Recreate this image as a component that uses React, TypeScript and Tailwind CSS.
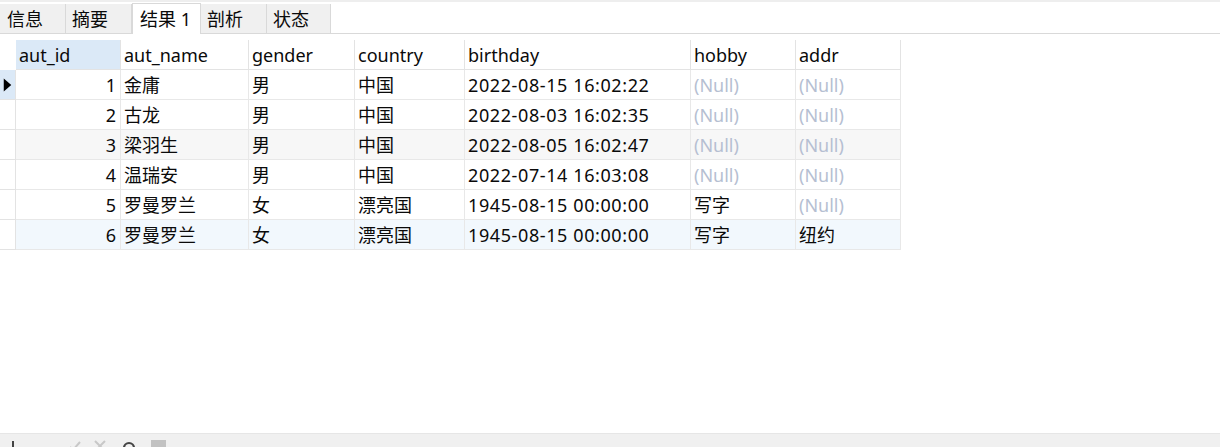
import React from "react";

const font = {
  fontFamily: '"Noto Sans", "Noto Sans CJK SC", sans-serif',
};

const cols = [
  { key: "id", label: "aut_id", w: "w-[105px]", right: true },
  { key: "name", label: "aut_name", w: "w-[128px]" },
  { key: "gender", label: "gender", w: "w-[106px]" },
  { key: "country", label: "country", w: "w-[110px]" },
  { key: "birthday", label: "birthday", w: "w-[226px]" },
  { key: "hobby", label: "hobby", w: "w-[105px]" },
  { key: "addr", label: "addr", w: "w-[105px]" },
];

type Row = Record<string, string | null>;

const rows: Row[] = [
  { id: "1", name: "金庸", gender: "男", country: "中国", birthday: "2022-08-15 16:02:22", hobby: null, addr: null },
  { id: "2", name: "古龙", gender: "男", country: "中国", birthday: "2022-08-03 16:02:35", hobby: null, addr: null },
  { id: "3", name: "梁羽生", gender: "男", country: "中国", birthday: "2022-08-05 16:02:47", hobby: null, addr: null },
  { id: "4", name: "温瑞安", gender: "男", country: "中国", birthday: "2022-07-14 16:03:08", hobby: null, addr: null },
  { id: "5", name: "罗曼罗兰", gender: "女", country: "漂亮国", birthday: "1945-08-15 00:00:00", hobby: "写字", addr: null },
  { id: "6", name: "罗曼罗兰", gender: "女", country: "漂亮国", birthday: "1945-08-15 00:00:00", hobby: "写字", addr: "纽约" },
];

const rowBg = ["bg-white", "bg-white", "bg-[#f7f7f7]", "bg-white", "bg-white", "bg-[#f2f8fd]"];

const tabs = ["信息", "摘要", "结果 1", "剖析", "状态"];

export default function App() {
  return (
    <div className="w-[1220px] h-[447px] bg-white flex flex-col overflow-hidden text-[18px] text-[#0a0a0a]" style={font}>
      {/* tab strip */}
      <div className="h-[2px] bg-[#eeeeee]" />
      <div className="h-[32px] flex items-end border-b border-[#d9d9d9]">
        {tabs.map((t, i) =>
          i === 2 ? (
            <div
              key={t}
              className="h-[31px] w-[69px] -mb-px bg-white border border-b-0 border-[#d9d9d9] flex items-center pl-[7px] pt-[1px]"
            >
              {t}
            </div>
          ) : (
            <div
              key={t}
              className={`h-[29px] ${i === 4 ? "w-[64px]" : "w-[66px]"} bg-[#f0f0f0] border-r border-[#d9d9d9] flex items-center pt-[2px] ${i === 0 ? "pl-[7px]" : "pl-[6px]"}`}
            >
              {t}
            </div>
          )
        )}
      </div>

      {/* grid */}
      <div className="mt-[6px] flex flex-col w-fit">
        <div className="flex h-[30px]">
          <div className="w-[16px]" />
          {cols.map((c, i) => (
            <div
              key={c.key}
              className={`${c.w} border-b border-r border-[#e3e3e3] flex items-center pl-[3px] pt-[1px] ${i === 0 ? "bg-[#dbe9f7]" : "bg-white"}`}
            >
              {c.label}
            </div>
          ))}
        </div>
        {rows.map((r, ri) => (
          <div key={ri} className={`flex h-[30px] ${rowBg[ri]}`}>
            <div
              className={`w-[16px] border-r border-b border-[#e3e3e3] flex items-center ${ri === 0 ? "bg-[#dbe9f7]" : "bg-white"}`}
            >
              {ri === 0 && (
                <svg width="16" height="30" viewBox="0 0 16 30">
                  <path d="M4 8 L12 15 L4 22 Z" fill="#000" />
                </svg>
              )}
            </div>
            {cols.map((c) => {
              const v = r[c.key];
              return (
                <div
                  key={c.key}
                  className={`${c.w} border-r border-b border-[#e8e8e8] flex items-center whitespace-nowrap overflow-hidden pt-[1px] ${
                    c.right ? "justify-end pr-[4px]" : "pl-[3px]"
                  } ${v === null ? "text-[#b6bfd2]" : ""} ${c.key === "birthday" ? "tracking-[0.6px]" : ""}`}
                >
                  {v === null ? "(Null)" : v}
                </div>
              );
            })}
          </div>
        ))}
      </div>

      <div className="flex-1" />

      {/* bottom toolbar */}
      <div className="h-[14px] bg-[#f0f0f0] border-t border-[#e6e6e6] relative overflow-hidden">
        <div className="absolute left-[12px] top-[7px] w-[2px] h-[10px] bg-[#444]" />
        <svg className="absolute left-[68px] top-[5px]" width="14" height="14" viewBox="0 0 14 14">
          <path d="M2 8 L5 11 L12 3" stroke="#c8c8c8" strokeWidth="2" fill="none" />
        </svg>
        <svg className="absolute left-[93px] top-[5px]" width="14" height="14" viewBox="0 0 14 14">
          <path d="M2 2 L12 12 M12 2 L2 12" stroke="#c8c8c8" strokeWidth="2" fill="none" />
        </svg>
        <svg className="absolute left-[121px] top-[6px]" width="16" height="16" viewBox="0 0 16 16">
          <path d="M3 8 A5 5 0 1 1 13 8" stroke="#444" strokeWidth="2.2" fill="none" />
        </svg>
        <div className="absolute left-[151px] top-[6px] w-[15px] h-[15px] bg-[#c2c2c2]" />
      </div>
    </div>
  );
}
